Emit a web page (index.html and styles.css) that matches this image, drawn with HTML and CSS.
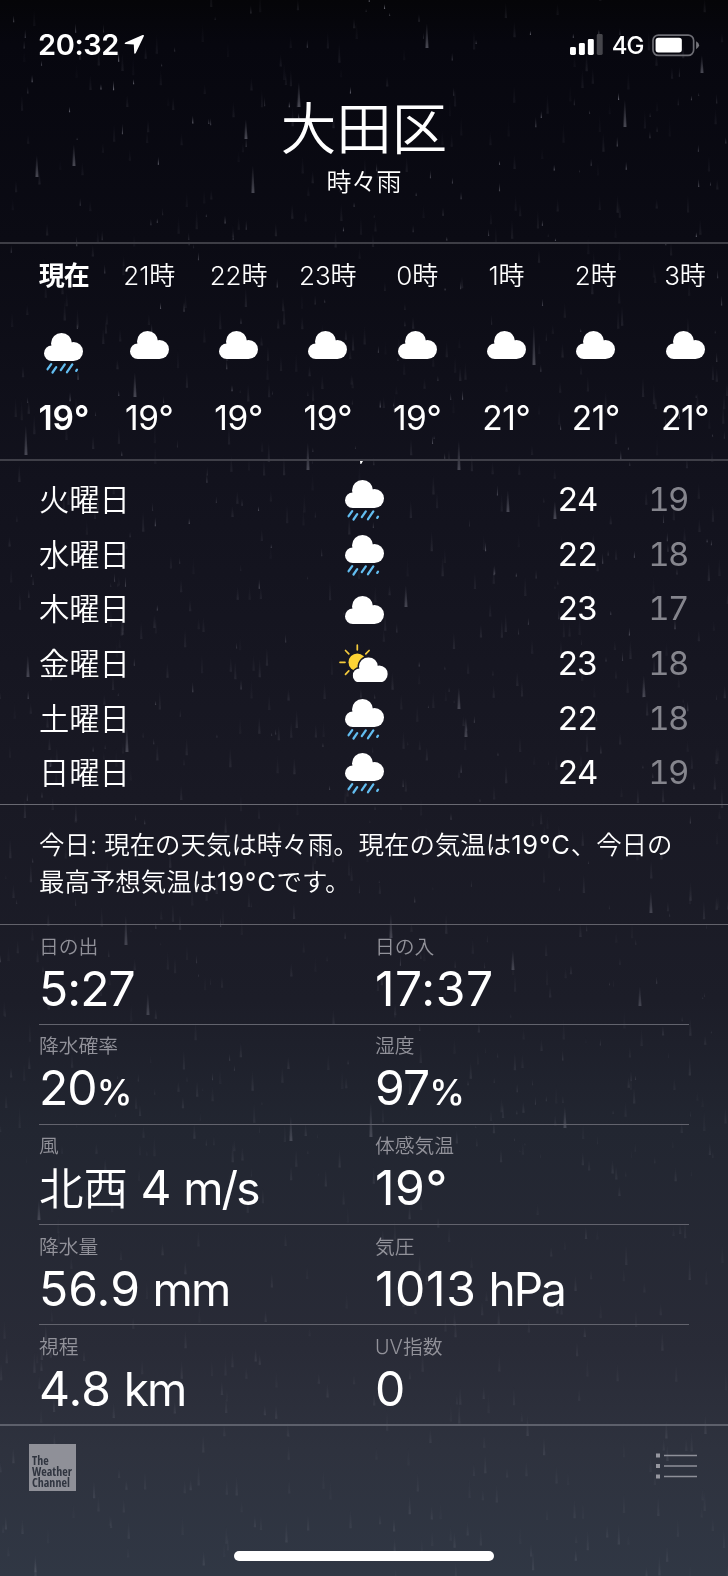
FILE: index.html
```html
<!DOCTYPE html>
<html lang="ja">
<head>
<meta charset="utf-8">
<title>天気 - 大田区</title>
<link rel="stylesheet" href="styles.css">
</head>
<body>
<svg class="defs" width="0" height="0" aria-hidden="true">
  <symbol id="cloud" viewBox="0 0 39 28"><g fill="#fff"><circle cx="7.8" cy="20.2" r="7.8"/><circle cx="17.5" cy="10.5" r="10.5"/><circle cx="29.5" cy="18.5" r="9.5"/><rect x="7.8" y="16" width="21.7" height="12"/></g></symbol>
  <symbol id="rain" viewBox="0 0 39 42"><use href="#cloud" width="39" height="28"/><path d="M7.2 31.2l-3.6 5M12.2 34.2l-3.7 5.3M20.8 31.4l-4 5.7M28.3 31.4L23 39.2M33 36.6l-.8 1.2" fill="none" stroke="#62bdf0" stroke-width="2.3" stroke-linecap="round"/></symbol>
  <symbol id="sun" viewBox="0 0 50 38"><circle cx="18.3" cy="18.3" r="8.8" fill="#fdd335"/><path d="M18.3 1.2v4.6M6.5 6.5L9.8 9.8M30.1 6.5l-3.3 3.3M1 18.3h5M9.8 26.8l-3.3 3.5" stroke="#f5cb3c" stroke-width="1.7" stroke-linecap="round"/><g transform="translate(13.7 13.3) scale(.9)"><g fill="#fff" stroke="#171722" stroke-width="3.2"><circle cx="7.8" cy="20.2" r="7.8"/><circle cx="17.5" cy="10.5" r="10.5"/><circle cx="29.5" cy="18.5" r="9.5"/></g><use href="#cloud" width="39" height="28"/></g></symbol>
</svg>
<div class="app">
  <canvas class="rainfall" width="728" height="1576"></canvas>
  <header class="status">
    <span class="clock">20:32</span>
    <svg class="arrow" width="21" height="21" viewBox="0 0 21 21"><path d="M18.800 1L1.400 8.600q-1.500.9.200 1.500l8.300.5.400 8.400q.6 1.700 1.600.2L20 2.300Q20.500.3 18.800 1z" fill="#fff"/></svg>
    <svg class="signal" width="34" height="21" viewBox="0 0 34 21"><g fill="#fff"><rect x="0" y="13" width="6" height="8" rx="1.500"/><rect x="9" y="9" width="6" height="12" rx="1.500"/><rect x="18" y="5" width="6" height="16" rx="1.500"/><rect x="27" y="0" width="6" height="21" rx="1.500" opacity=".25"/></g></svg>
    <span class="network">4G</span>
    <svg class="battery" width="48" height="23" viewBox="0 0 48 23"><rect x="1" y="1" width="41" height="20.500" rx="5.500" fill="none" stroke="#6d6d74" stroke-width="1.700"/><rect x="3.600" y="3.800" width="26.500" height="14.800" rx="2.800" fill="#fff"/><path d="M44.500 7.300q3 1.500 3 4t-3 4z" fill="#77777d"/></svg>
  </header>
  <section class="place">
    <h1>大田区</h1>
    <p>時々雨</p>
  </section>
  <section class="hours">
    <div class="hour now"><span>現在</span><svg class="icon rainy"><use href="#rain"/></svg><b>19°</b></div>
    <div class="hour"><span>21時</span><svg class="icon"><use href="#cloud"/></svg><b>19°</b></div>
    <div class="hour"><span>22時</span><svg class="icon"><use href="#cloud"/></svg><b>19°</b></div>
    <div class="hour"><span>23時</span><svg class="icon"><use href="#cloud"/></svg><b>19°</b></div>
    <div class="hour"><span>0時</span><svg class="icon"><use href="#cloud"/></svg><b>19°</b></div>
    <div class="hour"><span>1時</span><svg class="icon"><use href="#cloud"/></svg><b>21°</b></div>
    <div class="hour"><span>2時</span><svg class="icon"><use href="#cloud"/></svg><b>21°</b></div>
    <div class="hour"><span>3時</span><svg class="icon"><use href="#cloud"/></svg><b>21°</b></div>
  </section>
  <section class="days">
    <svg class="edge" width="4" height="4"><path d="M0 0h3L1.200 3H.4z" fill="#fff"/></svg>
    <div class="day"><span>火曜日</span><svg class="icon rainy"><use href="#rain"/></svg><b>24</b><i>19</i></div>
    <div class="day"><span>水曜日</span><svg class="icon rainy"><use href="#rain"/></svg><b>22</b><i>18</i></div>
    <div class="day"><span>木曜日</span><svg class="icon"><use href="#cloud"/></svg><b>23</b><i>17</i></div>
    <div class="day"><span>金曜日</span><svg class="icon sunny"><use href="#sun"/></svg><b>23</b><i>18</i></div>
    <div class="day"><span>土曜日</span><svg class="icon rainy"><use href="#rain"/></svg><b>22</b><i>18</i></div>
    <div class="day"><span>日曜日</span><svg class="icon rainy"><use href="#rain"/></svg><b>24</b><i>19</i></div>
  </section>
  <section class="summary"><p>今日: 現在の天気は時々雨。現在の気温は<em>19°C</em>、今日の<br>最高予想気温は<em>19°C</em>です。</p></section>
  <section class="details">
    <div class="row"><div><small>日の出</small><strong>5:27</strong></div><div><small>日の入</small><strong class="wide">17:37</strong></div></div>
    <div class="row"><div><small>降水確率</small><strong>20<span class="pct">%</span></strong></div><div><small>湿度</small><strong>97<span class="pct">%</span></strong></div></div>
    <div class="row"><div><small>風</small><strong><span class="kanji">北西</span> 4 <span class="unit">m/s</span></strong></div><div><small>体感気温</small><strong class="wide">19°</strong></div></div>
    <div class="row"><div><small>降水量</small><strong class="decimal">56.9 <span class="unit">mm</span></strong></div><div><small>気圧</small><strong class="wide">1013 <span class="unit">hPa</span></strong></div></div>
    <div class="row"><div><small>視程</small><strong class="decimal">4.8 <span class="unit">km</span></strong></div><div><small>UV指数</small><strong>0</strong></div></div>
  </section>
  <footer class="bar">
    <div class="logo">The<br>Weather<br>Channel</div>
    <svg class="list" width="42" height="27" viewBox="0 0 42 27"><path d="M0 .5h4v4H0zM0 11h4v4H0zM0 21.500h4v4H0z" fill="#9697a0"/><path d="M8 2.500h33M8 13h33M8 23.500h33" stroke="#8e9099" stroke-width="1.500"/></svg>
  </footer>
  <div class="home"></div>
</div>
<script src="rain.js"></script>
</body>
</html>
```
FILE: styles.css
```css
body { margin: 0; }
.defs { position: absolute; }
.app {
  position: relative;
  box-sizing: border-box;
  width: 728px;
  height: 1576px;
  overflow: hidden;
  display: flex;
  flex-direction: column;
  color: #fff;
  font-family: Inter, "Noto Sans CJK JP", sans-serif;
  font-weight: 350;
  background: linear-gradient(#050508 0, #07070f 45px, #0b0b14 240px, #12121d 480px, #191924 800px, #1c1d28 1000px, #222631 1130px, #292b37 1350px, #2e323e 1450px, #303744 1576px);
}
.rainfall { position: absolute; left: 0; top: 0; }
.status, .place, .hours, .days, .summary, .details, .bar, .home { position: relative; flex: none; }
.icon { display: block; width: 39px; height: 28px; }
.icon.rainy { height: 42px; }
.icon.sunny { width: 50px; height: 38px; }

.status { display: flex; height: 90px; box-sizing: border-box; padding: 30px 28px 0 38px; align-items: flex-start; }
.clock { font-size: 29px; line-height: 30px; font-weight: 600; width: 87px; white-space: nowrap; letter-spacing: -.4px; }
.arrow { margin-top: 4px; }
.signal { margin: 4px 0 0 425px; }
.network { width: 41px; margin-left: 8px; font-size: 24px; line-height: 32px; font-weight: 500; letter-spacing: -.9px; }
.battery { margin-top: 4px; }

.place { height: 152px; text-align: center; }
.place h1 { margin: 0; font-size: 55.500px; line-height: 78px; font-weight: 350; }
.place p { margin: 1px 0 0; font-size: 25px; line-height: 26px; }

.hours { display: grid; grid-template-columns: 81.4px repeat(7, 89.3px); height: 215px; padding-left: 23.2px; border-top: 2px solid #3d3d45; }
.hour { display: flex; flex-direction: column; align-items: center; height: 215px; }
.hour span { margin-top: 17px; height: 70px; font-size: 26px; line-height: 30px; white-space: nowrap; letter-spacing: -.1px; }
.hour .icon { flex: none; }
.hour.now .icon { margin-top: 2px; margin-bottom: -16px; }
.hour b { margin-top: 39px; font-size: 33.500px; line-height: 40px; font-weight: 370; letter-spacing: -.4px; }
.hour.now span { font-weight: 600; letter-spacing: -.8px; }
.hour.now b { font-weight: 600; letter-spacing: 0; }

.days { box-sizing: border-box; height: 345px; padding: 12px 39px 0; border-top: 2px solid #3f3f48; }
.edge { position: absolute; left: 360px; top: 0; }
.day { display: grid; grid-template-columns: 300px 50px 1fr 91px; align-items: center; height: 54.700px; }
.day span { font-size: 30.300px; line-height: 38px; padding-bottom: 1px; }
.day .icon { justify-self: center; }
.day .rainy { margin-top: 1px; }
.day .sunny { margin-bottom: 2px; }
.day b, .day i { font-size: 33px; line-height: 37px; padding-bottom: 2px; margin-right: 1.500px; font-weight: 370; font-style: normal; text-align: right; font-variant-numeric: tabular-nums; letter-spacing: -1.800px; }
.day i { color: #85858d; }

.summary { box-sizing: border-box; height: 120px; padding: 21px 39px 0; border-top: 1px solid #696972; }
.summary p { margin: 0; font-size: 25.450px; line-height: 37px; white-space: nowrap; }
.summary em { font-style: normal; font-weight: 400; letter-spacing: .8px; }

.details { height: 499px; border-top: 1px solid #62626b; }
.row { box-sizing: border-box; display: grid; grid-template-columns: 336px 1fr; height: 100.200px; margin: 0 39px; padding-top: 6.800px; border-bottom: 1px solid #62636d; }
.row:first-child { height: 99.500px; }
.row:last-child { border-bottom: 0; }
.row small { display: block; font-size: 19.800px; line-height: 30px; color: #92929a; }
.row strong { display: block; font-size: 48px; line-height: 54px; font-weight: 400; white-space: nowrap; letter-spacing: -.9px; }
.row .wide { letter-spacing: .6px; word-spacing: -2px; }
.row .decimal { letter-spacing: .1px; word-spacing: -1px; }
.kanji { font-size: 44.500px; font-weight: 350; letter-spacing: 0; }
.pct { font-size: 36px; font-weight: 450; }
.unit { font-size: 46px; letter-spacing: -2px; }

.bar { display: flex; justify-content: space-between; align-items: flex-start; box-sizing: border-box; height: 126px; padding: 18px 30px 0 29px; border-top: 2px solid #5d606b; }
.logo { box-sizing: border-box; width: 47px; height: 47px; padding: 12px 0 0 3px; background: #8f9098; color: #303540; font: 700 12px/10.800px "Open Sans", sans-serif; font-stretch: 85%; }
.list { margin-top: 9px; }
.home { width: 260px; height: 10px; margin: 1px 0 0 234px; border-radius: 5px; background: #fff; }
```
FILE: rain.js
```js
const canvas = document.querySelector('.rainfall');
const ctx = canvas.getContext('2d');
let seed = 7321;
function rand() {
  seed = (seed * 1664525 + 1013904223) % 4294967296;
  return seed / 4294967296;
}
// Each drop fades in towards its lower end.
function drop(x, bottom, length, width, alpha) {
  const g = ctx.createLinearGradient(0, bottom - length, 0, bottom);
  g.addColorStop(0, 'rgba(205,205,220,0)');
  g.addColorStop(1, `rgba(205,205,220,${alpha})`);
  ctx.fillStyle = g;
  ctx.beginPath();
  ctx.moveTo(x - width * 0.3, bottom - length);
  ctx.lineTo(x + width * 0.1, bottom - length);
  ctx.lineTo(x + width / 2, bottom);
  ctx.lineTo(x - width / 2, bottom);
  ctx.fill();
}
for (let i = 0; i < 900; i++) {
  const y = rand() * 1600;
  drop(rand() * 728, y, 10 + rand() * 12, 2.4, 0.03 + rand() * 0.07);
}
for (let i = 0; i < 420; i++) {
  const y = rand() * 1180;
  drop(rand() * 728, y, 3 + rand() * 8, 1.2, (0.12 + rand() * 0.4) * (1 - y / 1500));
}
const large = [[253,193,28],[37,177,22],[427,48,25],[625,127,28],[299,107,25],[74,166,22],[246,139,20],[702,73,18],
  [135,397,25],[26,455,30],[308,470,28],[534,365,40],[459,470,30],[127,752,26],[406,607,22],[459,709,22],
  [466,737,20],[508,512,22],[555,519,18],[28,677,22],[644,697,22],[126,945,30],[148,1015,22],[513,970,20],
  [391,938,25],[640,1006,20],[651,913,22],[291,1141,25],[371,1137,35],[565,1128,22],[39,1220,20]];
for (const [x, y, len] of large) drop(x, y, len, 3, 0.34 * (1 - y / 3000));
```
